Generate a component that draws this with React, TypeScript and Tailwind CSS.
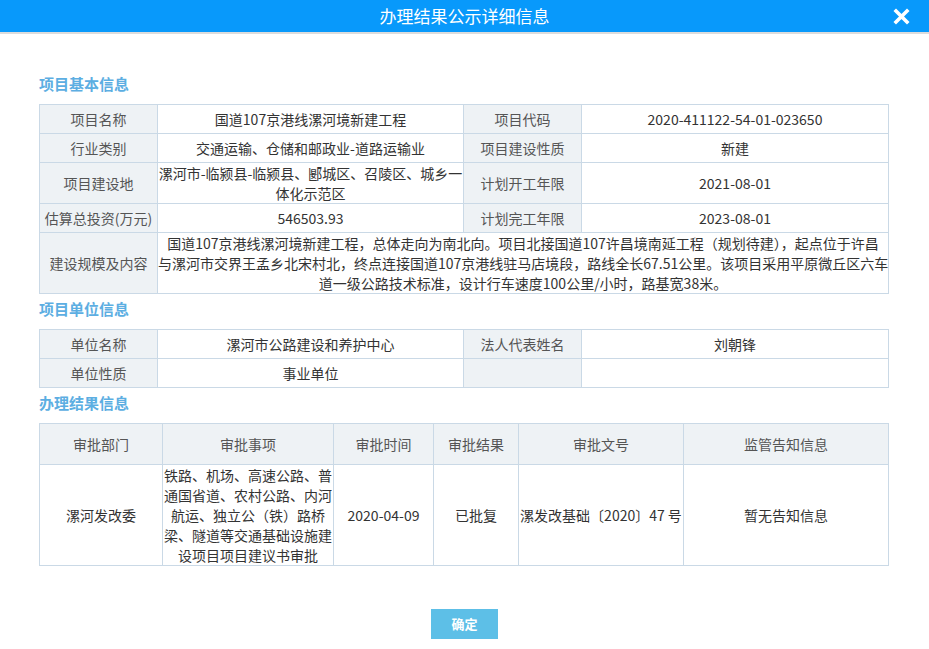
import React from 'react';

const font = { fontFamily: '"Noto Sans CJK SC", "Noto Sans", sans-serif' };

const th = 'border border-[#cad9e6] bg-[#eef2f5] text-[#555] font-normal text-center align-middle p-0 h-[29px]';
const td = 'border border-[#cad9e6] bg-white text-[#333] text-center align-middle p-0 h-[29px]';

const SectionTitle: React.FC<{ title: string; first?: boolean }> = ({ title, first }) => (
  <h2 className={`${first ? 'mt-0' : 'mt-[5px]'} mb-[10px] h-[20px] leading-[20px] text-[15px] font-bold text-[#5caee2]`}>
    {title}
  </h2>
);

export default function App() {
  return (
    <div className="w-[929px] h-[649px] bg-white flex flex-col overflow-hidden" style={font}>
      {/* 标题栏 */}
      <div className="relative h-[34px] shrink-0 bg-[#0899fb] border-b-2 border-[#dcdcdc] flex items-center justify-center">
        <span className="text-white text-[17px] leading-[32px]">办理结果公示详细信息</span>
        <button className="absolute right-[19px] top-[8px] w-[17px] h-[17px] flex items-center justify-center">
          <svg width="17" height="17" viewBox="0 0 17 17">
            <path d="M3 3 L14 14 M14 3 L3 14" stroke="white" strokeWidth="3.6" strokeLinecap="square" />
          </svg>
        </button>
      </div>

      <div className="px-[39px] pt-[40px] text-[14px] leading-[20px]">
        <SectionTitle title="项目基本信息" first />
        <table className="w-[849px] border-collapse table-fixed">
          <colgroup>
            <col className="w-[118px]" />
            <col className="w-[306px]" />
            <col className="w-[118px]" />
            <col className="w-[307px]" />
          </colgroup>
          <tbody>
            <tr>
              <th className={th}>项目名称</th>
              <td className={td}>国道107京港线漯河境新建工程</td>
              <th className={th}>项目代码</th>
              <td className={td}>2020-411122-54-01-023650</td>
            </tr>
            <tr>
              <th className={th}>行业类别</th>
              <td className={td}>交通运输、仓储和邮政业-道路运输业</td>
              <th className={th}>项目建设性质</th>
              <td className={td}>新建</td>
            </tr>
            <tr>
              <th className={th}>项目建设地</th>
              <td className={`${td} whitespace-nowrap`}>
                漯河市-临颍县-临颍县、郾城区、召陵区、城乡一
                <br />
                体化示范区
              </td>
              <th className={th}>计划开工年限</th>
              <td className={td}>2021-08-01</td>
            </tr>
            <tr>
              <th className={`${th} whitespace-nowrap`}>估算总投资(万元)</th>
              <td className={td}>546503.93</td>
              <th className={th}>计划完工年限</th>
              <td className={td}>2023-08-01</td>
            </tr>
            <tr>
              <th className={th}>建设规模及内容</th>
              <td className={`${td} whitespace-nowrap`} colSpan={3}>
                国道107京港线漯河境新建工程，总体走向为南北向。项目北接国道107许昌境南延工程（规划待建），起点位于许昌
                <br />
                与漯河市交界王孟乡北宋村北，终点连接国道107京港线驻马店境段，路线全长67.51公里。该项目采用平原微丘区六车
                <br />
                道一级公路技术标准，设计行车速度100公里/小时，路基宽38米。
              </td>
            </tr>
          </tbody>
        </table>

        <SectionTitle title="项目单位信息" />
        <table className="w-[849px] border-collapse table-fixed">
          <colgroup>
            <col className="w-[118px]" />
            <col className="w-[306px]" />
            <col className="w-[118px]" />
            <col className="w-[307px]" />
          </colgroup>
          <tbody>
            <tr>
              <th className={th}>单位名称</th>
              <td className={td}>漯河市公路建设和养护中心</td>
              <th className={th}>法人代表姓名</th>
              <td className={td}>刘朝锋</td>
            </tr>
            <tr>
              <th className={th}>单位性质</th>
              <td className={td}>事业单位</td>
              <th className={th}></th>
              <td className={td}></td>
            </tr>
          </tbody>
        </table>

        <SectionTitle title="办理结果信息" />
        <table className="w-[849px] border-collapse table-fixed">
          <colgroup>
            <col className="w-[123px]" />
            <col className="w-[171px]" />
            <col className="w-[100px]" />
            <col className="w-[85px]" />
            <col className="w-[165px]" />
            <col className="w-[205px]" />
          </colgroup>
          <thead>
            <tr>
              {['审批部门', '审批事项', '审批时间', '审批结果', '审批文号', '监管告知信息'].map((h) => (
                <th key={h} className={`${th} h-[41px]`}>
                  {h}
                </th>
              ))}
            </tr>
          </thead>
          <tbody>
            <tr>
              <td className={td}>漯河发改委</td>
              <td className={`${td} whitespace-nowrap`}>
                铁路、机场、高速公路、普
                <br />
                通国省道、农村公路、内河
                <br />
                航运、独立公（铁）路桥
                <br />
                梁、隧道等交通基础设施建
                <br />
                设项目项目建议书审批
              </td>
              <td className={td}>2020-04-09</td>
              <td className={td}>已批复</td>
              <td className={`${td} whitespace-nowrap`}>漯发改基础〔2020〕47 号</td>
              <td className={td}>暂无告知信息</td>
            </tr>
          </tbody>
        </table>

        <div className="flex justify-center mt-[43px]">
          <button className="w-[67px] h-[30px] bg-[#5dbfe7] text-white text-[13px] font-bold">确定</button>
        </div>
      </div>
    </div>
  );
}
